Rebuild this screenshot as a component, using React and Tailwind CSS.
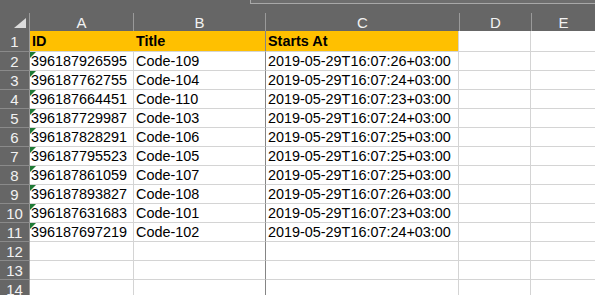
import React from "react";

const rows = [
  ["396187926595", "Code-109", "2019-05-29T16:07:26+03:00"],
  ["396187762755", "Code-104", "2019-05-29T16:07:24+03:00"],
  ["396187664451", "Code-110", "2019-05-29T16:07:23+03:00"],
  ["396187729987", "Code-103", "2019-05-29T16:07:24+03:00"],
  ["396187828291", "Code-106", "2019-05-29T16:07:25+03:00"],
  ["396187795523", "Code-105", "2019-05-29T16:07:25+03:00"],
  ["396187861059", "Code-107", "2019-05-29T16:07:25+03:00"],
  ["396187893827", "Code-108", "2019-05-29T16:07:26+03:00"],
  ["396187631683", "Code-101", "2019-05-29T16:07:23+03:00"],
  ["396187697219", "Code-102", "2019-05-29T16:07:24+03:00"],
  null,
  null,
  null,
];

const font = { fontFamily: '"Liberation Sans", Arial, sans-serif' };

function RowHead({ n, h }) {
  return (
    <div
      className={`w-[30px] shrink-0 ${h} border-r border-b border-r-[#9a9a9a] border-b-[#8a8a8a] bg-[#666666] text-[#f2f2f2] text-[15px] flex items-center justify-center leading-none`}
    >
      {n}
    </div>
  );
}

export default function App() {
  return (
    <div className="w-[595px] h-[295px] overflow-hidden bg-white" style={font}>
      {/* top strip */}
      <div className="h-[13px] bg-[#666666] flex justify-end">
        <div className="w-[345px] h-[4px] bg-[#6e6e6e] border-l border-b border-[#a8a8a8]" />
      </div>
      {/* column headers */}
      <div className="h-[18px] bg-[#666666] flex text-[#f2f2f2] text-[15px] leading-none">
        <div className="w-[30px] shrink-0 border-r border-[#9a9a9a] relative">
          <svg className="absolute left-[14px] top-[5px]" width="12" height="10" viewBox="0 0 12 10">
            <polygon points="12,0 12,10 0,10" fill="#dcdcdc" />
          </svg>
        </div>
        <div className="w-[104px] shrink-0 border-r border-[#9a9a9a] flex items-center justify-center">A</div>
        <div className="w-[132px] shrink-0 border-r border-[#9a9a9a] flex items-center justify-center">B</div>
        <div className="w-[194px] shrink-0 border-r border-[#9a9a9a] flex items-center justify-center">C</div>
        <div className="w-[72px] shrink-0 border-r border-[#9a9a9a] flex items-center justify-center">D</div>
        <div className="flex-1 flex items-center justify-center">E</div>
      </div>
      {/* row 1 */}
      <div className="flex text-[14.4px] leading-none text-black">
        <RowHead n={1} h="h-[21px]" />
        <div className="w-[104px] shrink-0 h-[21px] bg-[#ffc000] border-b border-[#d4d4d4] font-bold pl-[2px] flex items-center">ID</div>
        <div className="w-[132px] shrink-0 h-[21px] bg-[#ffc000] border-b border-[#d4d4d4] font-bold pl-[2px] flex items-center">Title</div>
        <div className="w-[194px] shrink-0 h-[21px] bg-[#ffc000] border-l border-b border-l-[#858585] border-b-[#d4d4d4] border-r border-r-[#d4d4d4] font-bold pl-[2px] flex items-center -ml-px">Starts At</div>
        <div className="w-[72px] shrink-0 h-[21px] border-r border-b border-[#d4d4d4]" />
        <div className="flex-1 h-[21px] border-b border-[#d4d4d4]" />
      </div>
      {rows.map((r, i) => (
        <div key={i} className="flex text-[14.4px] leading-none text-black">
          <RowHead n={i + 2} h="h-[19px]" />
          <div className="w-[104px] shrink-0 h-[19px] border-r border-b border-[#d4d4d4] pl-[1px] flex items-center relative">
            {r && (
              <svg className="absolute left-0 top-0" width="6" height="6" viewBox="0 0 6 6">
                <polygon points="0,0 6,0 0,6" fill="#1e7a35" />
              </svg>
            )}
            {r ? r[0] : ""}
          </div>
          <div className="w-[132px] shrink-0 h-[19px] border-b border-[#d4d4d4] pl-[2px] flex items-center">{r ? r[1] : ""}</div>
          <div className="w-[194px] shrink-0 h-[19px] border-l border-b border-r border-l-[#858585] border-b-[#d4d4d4] border-r-[#d4d4d4] pl-[2px] flex items-center -ml-px">{r ? r[2] : ""}</div>
          <div className="w-[72px] shrink-0 h-[19px] border-r border-b border-[#d4d4d4]" />
          <div className="flex-1 h-[19px] border-b border-[#d4d4d4]" />
        </div>
      ))}
    </div>
  );
}
